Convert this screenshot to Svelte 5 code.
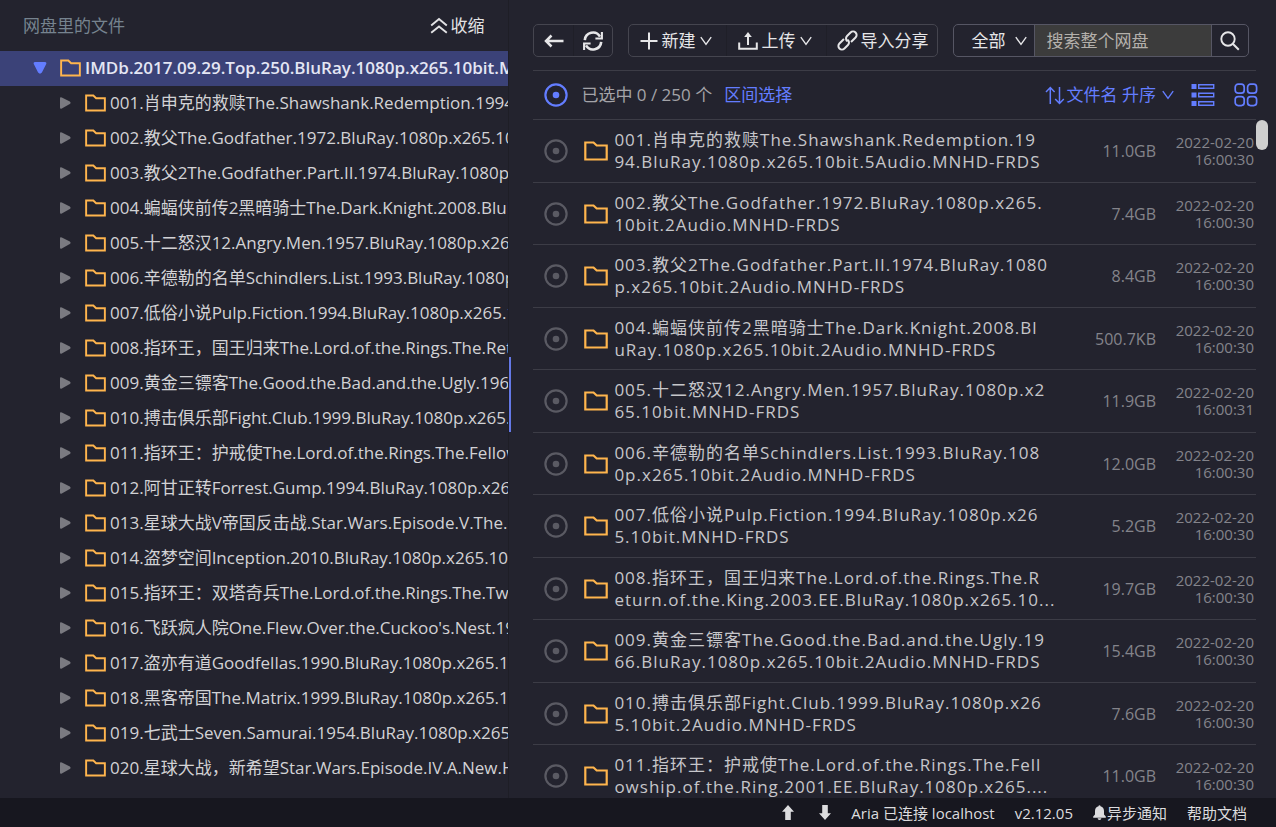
<script lang="ts">
  // `head` and `tail` are the two display lines of a long release name.
  type Entry = { head: string; tail: string; size: string; date: string; time: string };

  const root = 'IMDb.2017.09.29.Top.250.BluRay.1080p.x265.10bit.MNHD-FRDS';

  const files: Entry[] = [
    { head: '001.肖申克的救赎The.Shawshank.Redemption.19', tail: '94.BluRay.1080p.x265.10bit.5Audio.MNHD-FRDS', size: '11.0GB', date: '2022-02-20', time: '16:00:30' },
    { head: '002.教父The.Godfather.1972.BluRay.1080p.x265.', tail: '10bit.2Audio.MNHD-FRDS', size: '7.4GB', date: '2022-02-20', time: '16:00:30' },
    { head: '003.教父2The.Godfather.Part.II.1974.BluRay.1080', tail: 'p.x265.10bit.2Audio.MNHD-FRDS', size: '8.4GB', date: '2022-02-20', time: '16:00:30' },
    { head: '004.蝙蝠侠前传2黑暗骑士The.Dark.Knight.2008.Bl', tail: 'uRay.1080p.x265.10bit.2Audio.MNHD-FRDS', size: '500.7KB', date: '2022-02-20', time: '16:00:30' },
    { head: '005.十二怒汉12.Angry.Men.1957.BluRay.1080p.x2', tail: '65.10bit.MNHD-FRDS', size: '11.9GB', date: '2022-02-20', time: '16:00:31' },
    { head: '006.辛德勒的名单Schindlers.List.1993.BluRay.108', tail: '0p.x265.10bit.2Audio.MNHD-FRDS', size: '12.0GB', date: '2022-02-20', time: '16:00:30' },
    { head: '007.低俗小说Pulp.Fiction.1994.BluRay.1080p.x26', tail: '5.10bit.MNHD-FRDS', size: '5.2GB', date: '2022-02-20', time: '16:00:30' },
    { head: '008.指环王，国王归来The.Lord.of.the.Rings.The.R', tail: 'eturn.of.the.King.2003.EE.BluRay.1080p.x265.10...', size: '19.7GB', date: '2022-02-20', time: '16:00:30' },
    { head: '009.黄金三镖客The.Good.the.Bad.and.the.Ugly.19', tail: '66.BluRay.1080p.x265.10bit.2Audio.MNHD-FRDS', size: '15.4GB', date: '2022-02-20', time: '16:00:30' },
    { head: '010.搏击俱乐部Fight.Club.1999.BluRay.1080p.x26', tail: '5.10bit.2Audio.MNHD-FRDS', size: '7.6GB', date: '2022-02-20', time: '16:00:30' },
    { head: '011.指环王：护戒使The.Lord.of.the.Rings.The.Fell', tail: 'owship.of.the.Ring.2001.EE.BluRay.1080p.x265....', size: '11.0GB', date: '2022-02-20', time: '16:00:30' }
  ];

  const folders: string[] = [
    ...files.map((f) => f.head + f.tail),
    '012.阿甘正转Forrest.Gump.1994.BluRay.1080p.x265.10bit',
    '013.星球大战V帝国反击战.Star.Wars.Episode.V.The.Empire',
    '014.盗梦空间Inception.2010.BluRay.1080p.x265.10bit',
    '015.指环王：双塔奇兵The.Lord.of.the.Rings.The.Two.Towers',
    "016.飞跃疯人院One.Flew.Over.the.Cuckoo's.Nest.1975",
    '017.盗亦有道Goodfellas.1990.BluRay.1080p.x265.10bit',
    '018.黑客帝国The.Matrix.1999.BluRay.1080p.x265.10bit',
    '019.七武士Seven.Samurai.1954.BluRay.1080p.x265.10bit',
    '020.星球大战，新希望Star.Wars.Episode.IV.A.New.Hope'
  ];
</script>

{#snippet folder()}
  <svg class="folder" viewBox="0 0 24 20" aria-hidden="true">
    <path d="M1.3 1.5h8.2l3.2 3h10v14H1.3z" fill="none" stroke="currentColor" stroke-width="2.2" />
  </svg>
{/snippet}

{#snippet chevron()}
  <svg class="chevron" viewBox="0 0 12 10" aria-hidden="true">
    <path d="M.8 1.2 6 8.4l5.2-7.2" fill="none" stroke="currentColor" stroke-width="1.4" />
  </svg>
{/snippet}

{#snippet ring()}
  <svg class="ring" viewBox="0 0 24 24" aria-hidden="true">
    <circle cx="12" cy="12" r="10.6" fill="none" stroke="currentColor" stroke-width="2.2" />
    <circle cx="12" cy="12" r="3.3" fill="currentColor" />
  </svg>
{/snippet}

<div class="app">
  <main>
    <aside>
      <header class="tree-head">
        <span>网盘里的文件</span>
        <button class="collapse">
          <svg width="18" height="18" viewBox="0 0 18 18" aria-hidden="true">
            <path d="M1.2 8.6 9 2l7.8 6.6M1.2 15.8 9 9.4l7.8 6.4" fill="none" stroke="currentColor" stroke-width="1.9" />
          </svg>收缩
        </button>
      </header>
      <ul class="tree">
        <li class="node selected">
          <svg class="caret" viewBox="0 0 14 12" aria-hidden="true"><path d="M2.500 0h9q2.700 0 1.600 2.200L8.900 10.600q-1.900 2.200-3.800 0L.9 2.200Q-.2 0 2.500 0z" fill="#637dff" /></svg>
          {@render folder()}
          <span class="label">{root}</span>
        </li>
        {#each folders as name}
          <li class="node">
            <svg class="caret" viewBox="0 0 14 12" aria-hidden="true"><path d="M2 1.200Q2-.4 3.800.4l8 4.100q1.600 1.300 0 2.600l-8 4.500Q2 12.300 2 10.600z" fill="#7a7a81" /></svg>
            {@render folder()}
            <span class="label">{name}</span>
          </li>
        {/each}
      </ul>
    </aside>
    <div class="splitter"><span></span></div>

    <section>
      <div class="toolbar">
        <div class="group">
          <button class="square" aria-label="返回">
            <svg width="20" height="14" viewBox="0 0 20 14" aria-hidden="true"><path d="M19.500 7H2M7.500 1.500 2 7l5.500 5.500" fill="none" stroke="currentColor" stroke-width="2.500" /></svg>
          </button>
          <button class="square" aria-label="刷新">
            <svg width="20" height="20" viewBox="0 0 20 20" aria-hidden="true">
              <path d="M1.800 9.200A8.200 8.200 0 0 1 17 5.600M18.200 10.800A8.200 8.200 0 0 1 3 14.400" fill="none" stroke="currentColor" stroke-width="2.600" />
              <path d="M18.900 1v6.500h-6.500M1.100 19v-6.500h6.500" fill="none" stroke="currentColor" stroke-width="2.100" />
            </svg>
          </button>
        </div>

        <div class="group">
          <button class="menu">
            <svg width="18" height="18" viewBox="0 0 18 18" aria-hidden="true"><path d="M9 .5v17M.5 9h17" stroke="currentColor" stroke-width="2" /></svg>
            <span>新建</span>{@render chevron()}
          </button>
          <button class="menu">
            <svg width="20" height="18" viewBox="0 0 20 18" aria-hidden="true"><path d="M1.200 10.500v6.300h17.600v-6.300M10 13V2.500" fill="none" stroke="currentColor" stroke-width="2" /><path d="M10 0 6.200 5h7.600z" fill="currentColor" /></svg>
            <span>上传</span>{@render chevron()}
          </button>
          <button class="import">
            <svg width="23" height="23" viewBox="0 0 24 24" aria-hidden="true">
              <g transform="rotate(-45 12 12)" fill="none" stroke="currentColor" stroke-width="2.100">
                <path d="M10.500 8.300H3.800a3.700 3.700 0 0 0 0 7.400H9a3.700 3.700 0 0 0 3.600-4.500" />
                <path d="M13.500 15.700h6.700a3.700 3.700 0 0 0 0-7.400H15a3.700 3.700 0 0 0-3.600 4.500" />
              </g>
            </svg>
            <span>导入分享</span>
          </button>
        </div>

        <form class="group search" onsubmit={(e) => e.preventDefault()}>
          <label class="scope">
            <select aria-label="搜索范围"><option>全部</option></select>
            {@render chevron()}
          </label>
          <input type="text" placeholder="搜索整个网盘" aria-label="搜索整个网盘" />
          <button class="go" aria-label="搜索">
            <svg width="20" height="20" viewBox="0 0 20 20" aria-hidden="true"><circle cx="8" cy="8" r="6.700" fill="none" stroke="currentColor" stroke-width="1.900" /><path d="m12.800 12.800 6 6" stroke="currentColor" stroke-width="2" /></svg>
          </button>
        </form>
      </div>

      <div class="summary">
        <button aria-label="全选">{@render ring()}</button>
        <span class="count">已选中 0 / 250 个</span>
        <button>区间选择</button>
        <button class="sort">
          <svg width="20" height="19" viewBox="0 0 20 19" aria-hidden="true"><path d="M5.300 18V1.500M1 6l4.300-4.500L9.600 6M14.500 1v16.500M10.200 13l4.300 4.500 4.300-4.500" fill="none" stroke="currentColor" stroke-width="1.500" /></svg>
          <span>文件名 升序</span>{@render chevron()}
        </button>
        <button aria-label="列表视图">
          <svg width="24" height="24" viewBox="0 0 24 24" aria-hidden="true">
            <path d="M.5 1h5v5h-5zM.5 9.500h5v5h-5zM.5 18h5v5h-5z" fill="currentColor" />
            <path d="M7.700 1.700h15v3.600h-15zM7.700 10.200h15v3.600h-15zM7.700 18.700h15v3.600h-15z" fill="none" stroke="currentColor" stroke-width="1.400" />
          </svg>
        </button>
        <button class="grid-view" aria-label="网格视图">
          <svg width="24" height="24" viewBox="0 0 24 24" fill="none" stroke="currentColor" stroke-width="1.700" aria-hidden="true">
            <rect x="1.200" y="1.200" width="9" height="9" rx="3" /><rect x="13.600" y="1.200" width="9" height="9" rx="3" />
            <rect x="1.200" y="13.600" width="9" height="9" rx="3" /><rect x="13.600" y="13.600" width="9" height="9" rx="3" />
          </svg>
        </button>
      </div>

      <div class="list-wrap">
        <ul class="list">
          {#each files as file}
            <li>
              <button class="pick" aria-label={file.head + file.tail}>{@render ring()}</button>
              {@render folder()}
              <span class="name">{file.head}<br />{file.tail}</span>
              <span class="size">{file.size}</span>
              <span class="when">{file.date}<br />{file.time}</span>
            </li>
          {/each}
        </ul>
        <span class="thumb"></span>
      </div>
    </section>
  </main>

  <footer>
    <svg width="12" height="15" viewBox="0 0 12 15" aria-hidden="true"><path d="M6 0 12 6.800H8.800V15H3.200V6.800H0z" fill="currentColor" /></svg>
    <svg width="12" height="15" viewBox="0 0 12 15" aria-hidden="true"><path d="M6 15 0 8.200h3.200V0h5.600v8.200H12z" fill="currentColor" /></svg>
    <span>Aria 已连接 localhost</span>
    <span>v2.12.05</span>
    <button class="notify">
      <svg width="13" height="15" viewBox="0 0 13 15" aria-hidden="true"><path d="M5.500 1.200a1 1 0 0 1 2 0C10 1.800 11 3.700 11 6v3.500l1.800 2v1.300H.2v-1.300L2 9.500V6c0-2.300 1-4.200 3.500-4.800zM4.600 13.300h3.800a1.900 1.700 0 0 1-3.800 0z" fill="currentColor" /></svg>异步通知
    </button>
    <button>帮助文档</button>
  </footer>
</div>

<style>
  :global(body) {
    margin: 0;
    background: #23232e;
  }

  .app {
    display: flex;
    flex-direction: column;
    height: 100vh;
    overflow: hidden;
    background: #23232e;
    color: #d2d2d5;
    font: 17px/22px 'Open Sans', 'Noto Sans CJK SC', sans-serif;
  }

  main {
    display: flex;
    flex: 1;
    min-height: 0;
  }

  button {
    display: flex;
    align-items: center;
    padding: 0;
    border: 0;
    background: none;
    color: inherit;
    font: inherit;
    white-space: nowrap;
    cursor: pointer;
  }

  svg {
    display: block;
    flex: none;
  }

  ul {
    margin: 0;
    padding: 0;
    list-style: none;
  }

  .folder {
    width: 24px;
    height: 20px;
    color: #ffb54d;
  }

  .chevron {
    width: 12px;
    height: 10px;
  }

  .ring {
    width: 24px;
    height: 24px;
  }

  /* Folder tree */
  aside {
    width: calc(40% - 2px);
    flex: none;
    overflow: hidden;
  }

  .tree-head {
    display: flex;
    justify-content: space-between;
    align-items: center;
    height: 51px;
    padding: 0 24px 0 23px;
    color: #76838f;
  }

  .collapse {
    gap: 2px;
    color: #e2e2e4;
  }

  .node {
    display: flex;
    align-items: center;
    height: 35px;
    box-sizing: border-box;
    padding: 0 0 2px 58px;
    white-space: nowrap;
  }

  .node.selected {
    padding-left: 33px;
    background: #3b4278;
    color: #e4e6f4;
    font-weight: 600;
  }

  .caret {
    width: 14px;
    height: 12px;
    margin-right: 13px;
  }

  .node .folder {
    width: 21px;
    height: 18px;
    margin-right: 4px;
  }

  .label {
    flex: 1;
    min-width: 0;
    overflow: hidden;
  }

  .splitter {
    position: relative;
    width: 3px;
    flex: none;
    border-left: 1px solid #1e1e26;
    box-sizing: border-box;
  }

  .splitter span {
    position: absolute;
    top: calc(50% - 42px);
    left: 0;
    width: 2px;
    height: 75px;
    background: #6478e6;
  }

  /* File pane */
  section {
    display: flex;
    flex: 1;
    flex-direction: column;
    min-width: 0;
    padding: 24px 20px 0 22px;
  }

  .toolbar {
    display: flex;
    gap: 15px;
    padding: 0 7px 13px 0;
    border-bottom: 1px solid #3c3c46;
    color: #e6e6e8;
  }

  .group {
    display: flex;
    height: 33px;
    box-sizing: border-box;
    border: 1px solid #45454f;
    border-radius: 5px;
    overflow: hidden;
  }

  .group > button + button {
    border-left: 1px solid #1f1f28;
  }

  .square {
    width: 39px;
    justify-content: center;
  }

  .menu {
    gap: 3px;
    padding: 0 14px 0 11px;
  }

  .group .chevron {
    margin-left: 2px;
  }

  .import {
    gap: 1px;
    padding: 0 9px;
  }

  .search {
    flex: 1;
    min-width: 0;
    border-color: #565664;
  }

  .scope {
    display: flex;
    align-items: center;
    width: 80px;
    flex: none;
    box-sizing: border-box;
    padding: 0 7px 0 17px;
  }

  select {
    flex: 1;
    min-width: 0;
    padding: 0;
    border: 0;
    appearance: none;
    background: transparent;
    color: inherit;
    font: inherit;
  }

  input {
    flex: 1;
    min-width: 0;
    padding: 0 11px;
    border: solid #565664;
    border-width: 0 1px;
    background: #3c3c3c;
    color: #e6e6e8;
    font: inherit;
  }

  input::placeholder {
    color: #b4b0ab;
    opacity: 1;
  }

  .go {
    width: 36px;
    justify-content: center;
  }

  .summary {
    display: flex;
    align-items: center;
    height: 48px;
    padding-left: 11px;
    border-bottom: 1px solid #3c3c46;
    color: #637dff;
  }

  .count {
    margin: 0 12px 0 13px;
    color: #a3a3a8;
  }

  .sort {
    gap: 2px;
    margin: 0 17px 0 auto;
  }

  .sort .chevron {
    margin-left: 4px;
  }

  .grid-view {
    margin-left: 19px;
    margin-right: -2px;
  }

  .list-wrap {
    position: relative;
    flex: 1;
    min-height: 0;
  }

  .list {
    height: 100%;
    overflow: hidden;
  }

  .list li {
    display: grid;
    grid-template-columns: 40px 30px 1fr auto 98px;
    align-items: center;
    height: 63px;
    box-sizing: border-box;
    padding: 0 2px 0 11px;
    border-bottom: 1px solid #3c3c46;
  }

  .list li:nth-child(even) {
    height: 62px;
  }

  .pick {
    color: #5a5a63;
  }

  .name {
    color: #c6c6ca;
    letter-spacing: 1px;
    white-space: nowrap;
  }

  .size {
    color: #84848b;
    font-size: 16px;
    text-align: right;
  }

  .when {
    color: #84848b;
    font-size: 15px;
    line-height: 17px;
    text-align: right;
  }

  .thumb {
    position: absolute;
    top: 0;
    right: -12px;
    width: 12px;
    height: 30px;
    border-radius: 6px;
    background: #cfcfcf;
  }

  /* Status bar */
  footer {
    display: flex;
    align-items: center;
    justify-content: flex-end;
    gap: 20px;
    height: 29px;
    flex: none;
    padding-right: 29px;
    background: #17171f;
    color: #dcdcde;
    font-size: 15px;
  }

  footer > svg:first-child {
    margin-right: 5px;
  }

  .notify {
    gap: 1px;
  }
</style>
